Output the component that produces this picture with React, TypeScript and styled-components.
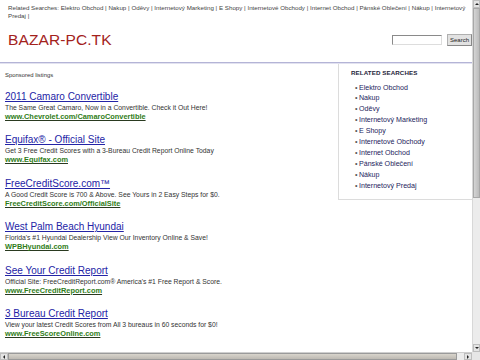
import React from "react";
import styled, { createGlobalStyle } from "styled-components";

const Global = createGlobalStyle`
  html, body { margin: 0; padding: 0; background: #fff; }
  body { font-family: "Liberation Sans", Arial, sans-serif; }
`;

const Frame = styled.div`
  display: grid;
  grid-template-columns: 472px 8px;
  grid-template-rows: 352px 8px;
  width: 480px;
  height: 360px;
  overflow: hidden;
  background: #fff;
`;

const Viewport = styled.div`
  overflow: hidden;
  display: flex;
  flex-direction: column;
`;

const TopLinks = styled.div`
  padding: 4px 0 0 8px;
  font-size: 6.2px;
  line-height: 8px;
  color: #444;
  height: 16px;
  overflow: hidden;
`;

const TopWord = styled.span`
  color: #444;
`;

const LogoRow = styled.div`
  display: flex;
  align-items: center;
  justify-content: space-between;
  height: 40px;
  padding: 0 0 2px 8px;
`;

const Logo = styled.div`
  font-size: 15.5px;
  color: #a3221c;
  letter-spacing: 0.1px;
`;

const SearchBox = styled.div`
  display: flex;
  align-items: center;
  gap: 5px;
`;

const SearchInput = styled.div`
  width: 48px;
  height: 8px;
  border: 1px solid #8a8a8a;
  border-right-color: #ddd;
  border-bottom-color: #ddd;
  background: #fff;
`;

const SearchButton = styled.div`
  width: 25px;
  height: 12px;
  box-sizing: border-box;
  background: #e2e2e2;
  border: 1px solid #b0b0b0;
  border-right-color: #888;
  border-bottom-color: #888;
  font-size: 6px;
  line-height: 10px;
  text-align: center;
  color: #222;
`;

const Divider = styled.div`
  height: 1px;
  background: #b4b4d6;
  border-bottom: 1px solid #e2e2f0;
`;

const Body = styled.div`
  display: flex;
  align-items: flex-start;
`;

const Main = styled.div`
  flex: 1;
  padding: 7px 0 0 5px;
`;

const Sponsored = styled.div`
  font-size: 5.9px;
  line-height: 8px;
  color: #333;
  margin-bottom: 12px;
`;

const Ad = styled.div`
  margin-bottom: 13.4px;
`;

const AdTitle = styled.div`
  font-size: 10px;
  line-height: 12px;
  color: #2424a6;
  text-decoration: underline;
  white-space: nowrap;
`;

const AdDesc = styled.div`
  font-size: 6.8px;
  line-height: 9px;
  color: #333;
  white-space: nowrap;
`;

const AdUrl = styled.div`
  font-size: 7.4px;
  line-height: 9px;
  font-weight: bold;
  color: #2f7d18;
  text-decoration: underline;
  text-decoration-color: #2a3a20;
  white-space: nowrap;
`;

const Sidebar = styled.div`
  width: 121px;
  padding: 4px 0 7px 12px;
  border-left: 1px solid #dcdcdc;
  border-bottom: 1px solid #dcdcdc;
`;

const SideTitle = styled.div`
  font-size: 6.2px;
  line-height: 10px;
  font-weight: bold;
  color: #26263a;
  letter-spacing: 0.1px;
  margin-bottom: 4.5px;
`;

const SideList = styled.ul`
  list-style: none;
  margin: 0;
  padding: 0 0 0 4px;
`;

const SideItem = styled.li`
  font-size: 7.1px;
  line-height: 10.9px;
  color: #1c1c5c;
  white-space: nowrap;
  &::before {
    content: "•";
    margin-right: 1.5px;
    color: #555;
  }
`;

const VBar = styled.div`
  display: flex;
  flex-direction: column;
  background: #ececec;
  border-left: 1px solid #d8d8d8;
  box-sizing: border-box;
`;

const HBar = styled.div`
  display: flex;
  background: #ececec;
  border-top: 1px solid #cfcfcf;
  box-sizing: border-box;
`;

const ArrowBtn = styled.div<{ $dir: "up" | "down" | "left" | "right" }>`
  width: ${(p) => (p.$dir === "up" || p.$dir === "down" ? "100%" : "8px")};
  height: ${(p) => (p.$dir === "up" || p.$dir === "down" ? "8px" : "100%")};
  flex-shrink: 0;
  display: flex;
  align-items: center;
  justify-content: center;
  background: #e4e4e4;
  box-sizing: border-box;
  border: 1px solid #bdbdbd;
  &::after {
    content: "";
    width: 0;
    height: 0;
    ${(p) =>
      p.$dir === "up"
        ? "border-left:2px solid transparent;border-right:2px solid transparent;border-bottom:2px solid #222;"
        : p.$dir === "down"
        ? "border-left:2px solid transparent;border-right:2px solid transparent;border-top:2px solid #222;"
        : p.$dir === "left"
        ? "border-top:2px solid transparent;border-bottom:2px solid transparent;border-right:2px solid #222;"
        : "border-top:2px solid transparent;border-bottom:2px solid transparent;border-left:2px solid #222;"}
  }
`;

const VThumb = styled.div`
  height: 190px;
  flex-shrink: 0;
  background: linear-gradient(to right, #d4d4d4, #bcbcbc);
  border: 1px solid #a8a8a8;
  box-sizing: border-box;
`;

const HThumb = styled.div`
  width: 449px;
  flex-shrink: 0;
  background: linear-gradient(to bottom, #d8d4cc, #bdb9b2);
  border: 1px solid #9a9a9a;
  box-sizing: border-box;
`;

const Track = styled.div`
  flex: 1;
`;

const Corner = styled.div`
  background: #e6e6e6;
`;

const related = [
  "Elektro Obchod",
  "Nakup",
  "Oděvy",
  "Internetový Marketing",
  "E Shopy",
  "Internetové Obchody",
  "Internet Obchod",
  "Pánské Oblečení",
  "Nákup",
  "Internetový Predaj",
];

const ads = [
  {
    title: "2011 Camaro Convertible",
    desc: "The Same Great Camaro, Now in a Convertible. Check it Out Here!",
    url: "www.Chevrolet.com/CamaroConvertible",
  },
  {
    title: "Equifax® - Official Site",
    desc: "Get 3 Free Credit Scores with a 3-Bureau Credit Report Online Today",
    url: "www.Equifax.com",
  },
  {
    title: "FreeCreditScore.com™",
    desc: "A Good Credit Score is 700 & Above. See Yours in 2 Easy Steps for $0.",
    url: "FreeCreditScore.com/OfficialSite",
  },
  {
    title: "West Palm Beach Hyundai",
    desc: "Florida's #1 Hyundai Dealership View Our Inventory Online & Save!",
    url: "WPBHyundai.com",
  },
  {
    title: "See Your Credit Report",
    desc: "Official Site: FreeCreditReport.com® America's #1 Free Report & Score.",
    url: "www.FreeCreditReport.com",
  },
  {
    title: "3 Bureau Credit Report",
    desc: "View your latest Credit Scores from All 3 bureaus in 60 seconds for $0!",
    url: "www.FreeScoreOnline.com",
  },
];

const topWords: string[] = ["Related", "Searches:"];
related.forEach((r) => {
  r.split(" ").forEach((w) => topWords.push(w));
  topWords.push("|");
});

export default function App() {
  return (
    <>
      <Global />
      <Frame>
        <Viewport>
          <TopLinks>
            {topWords.map((w, i) => (
              <React.Fragment key={i}>
                <TopWord>{w}</TopWord>{" "}
              </React.Fragment>
            ))}
          </TopLinks>
          <LogoRow>
            <Logo>BAZAR-PC.TK</Logo>
            <SearchBox>
              <SearchInput />
              <SearchButton>Search</SearchButton>
            </SearchBox>
          </LogoRow>
          <Divider />
          <Body>
            <Main>
              <Sponsored>Sponsored listings</Sponsored>
              {ads.map((a) => (
                <Ad key={a.title}>
                  <AdTitle>{a.title}</AdTitle>
                  <AdDesc>{a.desc}</AdDesc>
                  <AdUrl>{a.url}</AdUrl>
                </Ad>
              ))}
            </Main>
            <Sidebar>
              <SideTitle>RELATED SEARCHES</SideTitle>
              <SideList>
                {related.map((r, i) => (
                  <SideItem key={i}>{r}</SideItem>
                ))}
              </SideList>
            </Sidebar>
          </Body>
        </Viewport>
        <VBar>
          <ArrowBtn $dir="up" />
          <VThumb />
          <Track />
          <ArrowBtn $dir="down" />
        </VBar>
        <HBar>
          <ArrowBtn $dir="left" />
          <HThumb />
          <Track />
          <ArrowBtn $dir="right" />
        </HBar>
        <Corner />
      </Frame>
    </>
  );
}
